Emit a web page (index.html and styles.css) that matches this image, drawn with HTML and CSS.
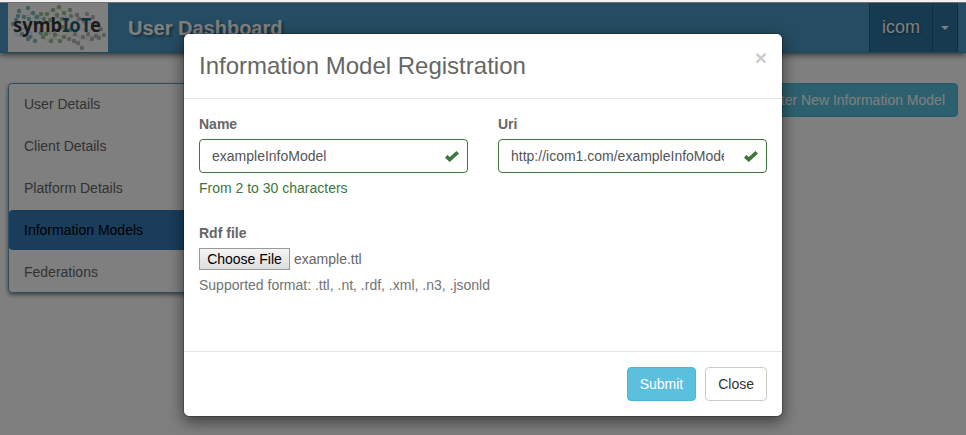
FILE: index.html
```html
<!DOCTYPE html>
<html lang="en">
<head>
<meta charset="utf-8">
<title>User Dashboard</title>
<link rel="stylesheet" href="styles.css">
</head>
<body>
<div class="page">
  <header class="navbar">
    <svg class="logo" viewBox="0 0 100 49" width="100" height="49" role="img" aria-label="symbIoTe">
      <rect width="100" height="49" fill="#fff"/>
      <g class="net teal">
        <path d="M11 8L16 14L25 10L28 20L18 24M8 17L18 24L7 31L14 34L22 29L28 38M25 10L33 15L28 20L33 30L22 29"/>
        <path class="nodes" d="M11 8h0M16 14h0M20 5h0M25 10h0M28 20h0M18 24h0M8 17h0M14 31h0M22 34h0M27 38h0M20 36h0M29 14h0M33 30h0M5 21h0M21 16h0M10 13h0"/>
      </g>
      <g class="net green">
        <path d="M33 11L39 11L45 7L51 4L56 10L59 17L49 14M39 11L42 20L49 14L54 24L38 31L47 30L54 24L62 27L56 35L47 30L43 40L35 34M43 35L53 38"/>
        <path class="nodes" d="M33 11h0M39 11h0M45 7h0M51 4h0M56 10h0M62 7h0M59 17h0M49 12h0M42 17h0M54 24h0M38 31h0M47 32h0M62 27h0M56 34h0M43 38h0M35 34h0M52 38h0M36 16h0M54 16h0"/>
      </g>
      <g class="net gray">
        <path d="M63 14L69 12L76 18L85 14L88 22L76 18L71 25L80 28L88 22L93 27L86 33L75 35L66 32M66 32L61 36L69 40L75 35L83 38L86 33L96 32M69 40L74 45M83 38L84 35"/>
        <path class="nodes" d="M63 13h0M69 12h0M79 11h0M76 18h0M85 14h0M88 22h0M71 16h0M80 31h0M93 26h0M88 33h0M75 34h0M67 31h0M61 36h0M66 38h0M84 36h0M96 32h0M74 45h0M70 40h0M91 35h0"/>
      </g>
      <text class="wordmark" x="5" y="29" textLength="88" lengthAdjust="spacingAndGlyphs">symb<tspan class="accent">IoT</tspan>e</text>
    </svg>
    <h1 class="brand">User Dashboard</h1>
    <div class="account">
      <span class="user">icom</span>
      <span class="toggle"><i class="caret"></i></span>
    </div>
  </header>
  <main class="content">
    <nav class="sidebar">
      <a class="item">User Details</a>
      <a class="item">Client Details</a>
      <a class="item">Platform Details</a>
      <a class="item active">Information Models</a>
      <a class="item">Federations</a>
    </nav>
    <button class="btn info register">Register New Information Model</button>
  </main>
</div>
<div class="overlay">
  <section class="modal">
    <div class="modal-header">
      <h2>Information Model Registration</h2>
      <span class="dismiss">×</span>
    </div>
    <div class="modal-body">
      <div class="fields">
        <div class="field">
          <label>Name</label>
          <div class="control"><span class="value">exampleInfoModel</span>
            <svg class="check" viewBox="0 0 14 11" width="14" height="11"><path d="M0 6.7L2.3 4.1L4.9 6.1L11.4 0L14 2.5L4.8 11Z"/></svg>
          </div>
          <p class="help success">From 2 to 30 characters</p>
        </div>
        <div class="field">
          <label>Uri</label>
          <div class="control"><span class="value">http://icom1.com/exampleInfoModel</span>
            <svg class="check" viewBox="0 0 14 11" width="14" height="11"><path d="M0 6.7L2.3 4.1L4.9 6.1L11.4 0L14 2.5L4.8 11Z"/></svg>
          </div>
        </div>
      </div>
      <div class="upload">
        <label>Rdf file</label>
        <div class="file"><button class="choose">Choose File</button><span>example.ttl</span></div>
        <p class="help">Supported format: .ttl, .nt, .rdf, .xml, .n3, .jsonld</p>
      </div>
    </div>
    <div class="modal-footer">
      <button class="btn info">Submit</button>
      <button class="btn plain">Close</button>
    </div>
  </section>
</div>
</body>
</html>
```
FILE: styles.css
```css
* { box-sizing: border-box; }
body {
  margin: 0;
  height: 435px;
  overflow: hidden;
  position: relative;
  background: #fff;
  color: #666;
  font: 14px/20px "Liberation Sans", Arial, sans-serif;
  border-top: 2px solid #f1f0f1;
}
h1, h2, p { margin: 0; }
button { font: inherit; white-space: nowrap; }
.page { height: 433px; border-top: 1px solid #fff; }

.navbar {
  display: flex;
  height: 50px;
  padding: 0 8px;
  background: #4a99c4;
  border-bottom: 1px solid #3f8bb5;
  box-shadow: 0 2px 6px rgba(0, 0, 0, .6);
}
.logo { display: block; flex: none; }
.net { fill: none; stroke-width: .8; opacity: .75; }
.net path { stroke-opacity: .55; }
.net .nodes { stroke-width: 4.4; stroke-linecap: round; stroke-opacity: .9; }
.teal { stroke: #4c9ea5; }
.green { stroke: #72a65a; }
.gray { stroke: #999; }
.wordmark { font: bold 19px "Noto Sans", sans-serif; fill: #353535; }
.accent { fill: #17617d; }
.brand {
  margin-left: 20px;
  font-size: 20px;
  line-height: 50px;
  color: #fff;
  text-shadow: 2px 2px 3px rgba(0, 0, 0, .4);
}
.account {
  display: flex;
  height: 49px;
  margin-left: auto;
  background: #2c76a3;
  border-left: 1px solid #1d5b82;
  border-right: 1px solid #1d5b82;
  color: #fff;
  font-size: 18px;
  line-height: 48px;
}
.user { width: 63px; text-align: center; border-right: 1px solid #1d5b82; text-shadow: 1px 1px 3px rgba(0, 0, 0, .5); }
.toggle { display: flex; width: 24px; align-items: center; justify-content: center; }
.caret { border: 4px solid transparent; border-top-color: #fff; border-bottom: 0; }

.content { display: flex; justify-content: space-between; align-items: flex-start; padding: 30px 8px; }
.sidebar {
  width: 235px;
  border: 1px solid #5b9cc0;
  border-radius: 4px;
  box-shadow: 0 2px 4px rgba(0, 0, 0, .5);
}
.item { display: block; height: 40px; padding: 10px 15px; border-radius: 4px; }
.item + .item { margin-top: 2px; }
.active { background: #337ab7; color: #000; }

.btn { height: 34px; padding: 6px 12px; border: 1px solid; border-radius: 4px; line-height: 20px; }
.info { color: #fff; background: #5bc0de; border-color: #46b8da; }
.plain { color: #333; background: #fff; border-color: #ccc; }

.overlay { position: absolute; inset: 0; background: rgba(0, 0, 0, .5); padding-top: 31px; }
.modal {
  width: 600px;
  height: 384px;
  margin: 0 auto;
  display: flex;
  flex-direction: column;
  background: #fff;
  background-clip: padding-box;
  border: 1px solid rgba(0, 0, 0, .2);
  border-radius: 6px;
  box-shadow: 0 5px 15px rgba(0, 0, 0, .5);
}
.modal-header { display: flex; justify-content: space-between; padding: 15px; border-bottom: 1px solid #e5e5e5; }
.modal-header h2 { font-size: 24px; font-weight: normal; line-height: 34px; }
.dismiss { font-size: 21px; font-weight: bold; line-height: 17px; color: #ccc; }
.modal-body { flex: 1; padding: 15px; }
.fields { display: grid; grid-template-columns: 1fr 1fr; gap: 30px; }
label { display: block; margin-bottom: 5px; font-weight: bold; }
.control {
  display: flex;
  align-items: center;
  height: 34px;
  padding: 0 8px 0 12px;
  border: 1px solid #3c763d;
  border-radius: 4px;
  color: #555;
}
.value { width: 213px; overflow: hidden; white-space: nowrap; }
.check { margin-left: auto; fill: #3c763d; }
.help { margin-top: 5px; color: #737373; }
.help.success { color: #3c763d; }
.upload { margin-top: 25px; }
.file { display: flex; gap: 4px; height: 22px; line-height: 22px; }
.choose {
  width: 91px;
  padding: 0;
  border: 1px solid #999;
  border-radius: 0;
  color: #000;
  background: linear-gradient(#f5f5f5, #ddd);
  line-height: 20px;
}
.modal-footer { display: flex; justify-content: flex-end; gap: 9px; padding: 15px; border-top: 1px solid #e5e5e5; }
```
